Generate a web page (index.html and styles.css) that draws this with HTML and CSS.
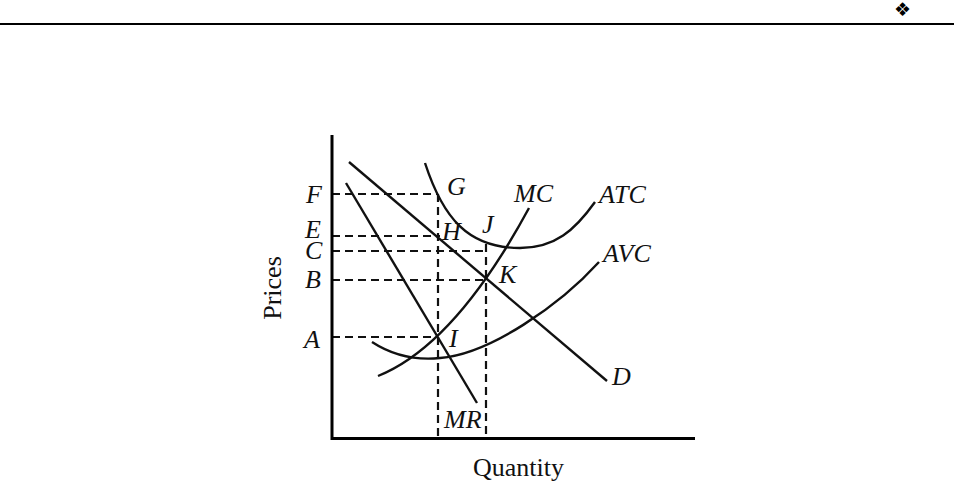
FILE: index.html
```html
<!DOCTYPE html>
<html lang="en">
<head>
<meta charset="utf-8">
<title>Monopoly cost curves</title>
<link rel="stylesheet" href="styles.css">
</head>
<body>
<header class="topbar"><span class="ornament">❖</span></header>
<main class="figure">
  <svg class="chart" width="440" height="360" viewBox="257 125 440 360" xmlns="http://www.w3.org/2000/svg">
    <g class="dash">
      <line x1="332" y1="194" x2="438" y2="194"/>
      <line x1="332" y1="236" x2="440" y2="236"/>
      <line x1="332" y1="251" x2="486" y2="251"/>
      <line x1="332" y1="280" x2="486" y2="280"/>
      <line x1="332" y1="337" x2="438" y2="337"/>
      <line x1="438" y1="194" x2="438" y2="437"/>
      <line x1="486" y1="244" x2="486" y2="437"/>
    </g>
    <g class="curve">
      <path d="M349,162 L607,381"/>
      <path d="M346,183 L477,403"/>
      <path d="M378,376 Q455,345 529,208"/>
      <path d="M425,163 C443,218 468,248 520,248 C555,248 575,230 595,202"/>
      <path d="M372,342 C395,357 420,360 440,358 C490,354 560,305 599,262"/>
    </g>
    <g class="axis">
      <path d="M332,135 L332,438.5 L695,438.5"/>
    </g>
    <g class="lbl">
      <text x="306" y="203">F</text>
      <text x="305" y="238">E</text>
      <text x="305" y="259">C</text>
      <text x="305" y="288">B</text>
      <text x="304" y="348">A</text>
      <text x="447" y="195">G</text>
      <text x="442" y="240">H</text>
      <text x="482" y="233">J</text>
      <text x="499" y="283">K</text>
      <text x="449" y="347">I</text>
      <text x="514" y="202">MC</text>
      <text x="599" y="203">ATC</text>
      <text x="603" y="262">AVC</text>
      <text x="612" y="385">D</text>
      <text x="444" y="428">MR</text>
    </g>
    <text class="axis-title" x="473" y="476">Quantity</text>
    <text class="axis-title" x="281" y="288" text-anchor="middle" transform="rotate(-90 281 288)">Prices</text>
  </svg>
</main>
</body>
</html>
```
FILE: styles.css
```css
html, body {
  margin: 0;
  padding: 0;
  background: #ffffff;
  overflow: hidden;
}
body {
  width: 954px;
  height: 486px;
  font-family: "Liberation Serif", "Times New Roman", serif;
  color: #000;
}
.topbar {
  height: 23px;
  border-bottom: 2px solid #000;
  display: flex;
  justify-content: flex-end;
  align-items: flex-start;
  padding-right: 43px;
  box-sizing: content-box;
}
.ornament {
  font-family: "DejaVu Sans", sans-serif;
  font-size: 19px;
  line-height: 19px;
  height: 23px;
  display: block;
}
.figure {
  display: flex;
  justify-content: center;
  padding-top: 100px;
}
.chart {
  display: block;
  overflow: visible;
}
.dash line {
  stroke: #111;
  stroke-width: 2.2;
  stroke-dasharray: 8 5;
  fill: none;
}
.curve path {
  stroke: #111;
  stroke-width: 2.4;
  fill: none;
}
.axis path {
  stroke: #000;
  stroke-width: 3;
  fill: none;
}
.lbl text {
  font-family: "Liberation Serif", "Times New Roman", serif;
  font-style: italic;
  font-size: 26px;
  fill: #111;
}
.axis-title {
  font-family: "Liberation Serif", "Times New Roman", serif;
  font-size: 26px;
  fill: #111;
}
```
